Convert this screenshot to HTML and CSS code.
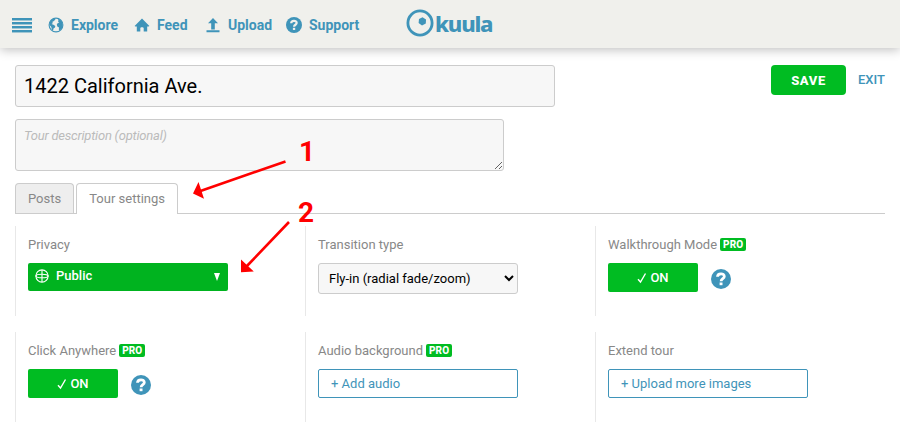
FILE: index.html
```html
<!DOCTYPE html>
<html lang="en">
<head>
    <meta charset="UTF-8">
    <meta name="viewport" content="width=device-width, initial-scale=1.0">
    <title>Kuula - Edit tour</title>
    <link rel="stylesheet" href="styles.css">
</head>
<body>
    <header class="header">
        <nav class="nav">
            <div class="menu-btn"><span></span><span></span><span></span><span></span></div>
            <a class="nav-item explore">
                <svg width="16" height="16" viewBox="0 0 16 16">
                    <circle cx="8" cy="8" r="6.9" fill="none" stroke="currentColor" stroke-width="1.1"/>
                    <path fill="currentColor" d="M1.200 6 3 3 6 1.300 7.500 2.300 6 4 4.500 4.800 4.700 6.300 3.500 7 5.500 7.700 7.300 9 7 10.500 5.500 11.500 5 14 3.800 12.800 3.300 10 1.500 8zM9.500 1.500 12 2.400 14.300 5 14.800 8 13.800 11.500 11.500 13.700 10.800 12.500 11 10.500 9.300 9.500 8.800 7.500 9.800 6 11.300 5.500 10 4.500 10.500 3z"/>
                </svg>
                <span>Explore</span>
            </a>
            <a class="nav-item feed">
                <svg width="16" height="16" viewBox="0 0 16 16">
                    <path fill="currentColor" d="M8 1.5 15.4 9l-.8.6h-1.4v5H9.700v-3.400c0-1.200-3.400-1.200-3.400 0v3.400H2.800v-5H1.400L.6 9z"/>
                </svg>
                <span>Feed</span>
            </a>
            <a class="nav-item upload">
                <svg width="14" height="16" viewBox="0 0 14 16">
                    <path fill="currentColor" d="M7 1l5 5.300H8.800v6.200H5.200V6.300H2zM.5 13.300h13v1.900H.5z"/>
                </svg>
                <span>Upload</span>
            </a>
            <a class="nav-item support">
                <svg width="16" height="16" viewBox="0 0 20 20">
                    <circle cx="10" cy="10" r="10" fill="currentColor"/>
                    <path d="M6.500 7.700C6.600 3.900 13.400 3.800 13.300 7.500c0 2.200-3.100 2.200-3.200 4.700" fill="none" stroke="#f0f0ec" stroke-width="2.800"/>
                    <rect x="8.600" y="13.500" width="2.900" height="2.700" fill="#f0f0ec"/>
                </svg>
                <span>Support</span>
            </a>
        </nav>
        <div class="logo">
            <svg width="28" height="28" viewBox="0 0 28 28">
                <circle cx="14" cy="14" r="12.100" fill="none" stroke="currentColor" stroke-width="2.800"/>
                <path fill="currentColor" d="M13 10 16.500 8.300 20 10.500 19.800 14.500 16 16.400 12.600 14z"/>
            </svg>
            <span>kuula</span>
        </div>
    </header>
    <main class="container">
        <div class="tour-top">
            <input class="tour-title" type="text" value="1422 California Ave.">
            <div class="actions">
                <button class="save">SAVE</button>
                <a class="exit">EXIT</a>
            </div>
        </div>
        <textarea class="tour-desc" placeholder="Tour description (optional)"></textarea>
        <div class="tabs">
            <div class="tab">Posts</div>
            <div class="tab active">Tour settings</div>
        </div>
        <div class="settings">
            <section class="cell">
                <div class="label">Privacy</div>
                <div class="privacy">
                    <svg width="14" height="14" viewBox="0 0 14 14" fill="none" stroke="#fff" stroke-width="1.1">
                        <circle cx="7" cy="7" r="6.1"/>
                        <ellipse cx="7" cy="7" rx="6.1" ry="1.8"/>
                        <path d="M7 1v12"/>
                    </svg>
                    <span>Public</span>
                    <svg class="caret" width="6" height="8" viewBox="0 0 6 8"><path fill="#fff" d="M0 0h6L3 8z"/></svg>
                </div>
            </section>
            <section class="cell">
                <div class="label">Transition type</div>
                <select class="select"><option>Fly-in (radial fade/zoom)</option></select>
            </section>
            <section class="cell">
                <div class="label">Walkthrough Mode <span class="pro">PRO</span></div>
                <div class="toggle-row">
                    <button class="toggle"><svg width="10" height="12" viewBox="0 0 10 12"><path d="M1 7.2 3.5 10 8.5 1.5" fill="none" stroke="#fff" stroke-width="1.4"/></svg>ON</button>
                    <svg class="help" width="20" height="20" viewBox="0 0 20 20">
                        <circle cx="10" cy="10" r="10" fill="currentColor"/>
                        <path d="M6.500 7.700C6.600 3.900 13.400 3.800 13.300 7.500c0 2.200-3.100 2.200-3.200 4.700" fill="none" stroke="#fff" stroke-width="2.800"/>
                        <rect x="8.600" y="13.500" width="2.900" height="2.700" fill="#fff"/>
                    </svg>
                </div>
            </section>
            <section class="cell">
                <div class="label">Click Anywhere <span class="pro">PRO</span></div>
                <div class="toggle-row">
                    <button class="toggle"><svg width="10" height="12" viewBox="0 0 10 12"><path d="M1 7.2 3.5 10 8.5 1.5" fill="none" stroke="#fff" stroke-width="1.4"/></svg>ON</button>
                    <svg class="help" width="20" height="20" viewBox="0 0 20 20">
                        <circle cx="10" cy="10" r="10" fill="currentColor"/>
                        <path d="M6.500 7.700C6.600 3.900 13.400 3.800 13.300 7.500c0 2.200-3.100 2.200-3.200 4.700" fill="none" stroke="#fff" stroke-width="2.800"/>
                        <rect x="8.600" y="13.500" width="2.900" height="2.700" fill="#fff"/>
                    </svg>
                </div>
            </section>
            <section class="cell">
                <div class="label">Audio background <span class="pro">PRO</span></div>
                <button class="outline-btn">+ Add audio</button>
            </section>
            <section class="cell">
                <div class="label">Extend tour</div>
                <button class="outline-btn">+ Upload more images</button>
            </section>
        </div>
    </main>
    <!-- numbered pointers on top of the page -->
    <svg class="pointers" width="900" height="440" viewBox="0 0 900 440">
        <path class="line" d="M285.5 161.5 199 191.5M289 222 246 267"/>
        <path class="head" d="M193 193.500 198.500 182 204 198.800zM241 272.300V259.500L253.800 271.500z"/>
        <text x="299" y="161">1</text>
        <text x="298" y="222">2</text>
    </svg>
</body>
</html>
```
FILE: styles.css
```css
html,body{
    margin:0;
    height:100%;
    background-color:#fff;
    font-family: Roboto, Arial, sans-serif;
    font-size:13px;
    overflow:hidden;
}
*{
    box-sizing:border-box;
}
input,textarea,select,button{
    font-family:inherit;
    margin:0;
    outline:none;
}
svg{
    display:block;
    flex:none;
}
.header{
    height:48px;
    display:flex;
    background-color:#f0f0ec;
    box-shadow:0 2px 10px rgba(0,0,0,0.25);
    color:#3f94b9;
}
.nav{
    display:flex;
    align-items:center;
    width:406px;
    padding-left:12px;
    padding-top:2px;
}
.menu-btn{
    width:20px;
    height:14px;
    display:flex;
    flex-direction:column;
    justify-content:space-between;
    margin-right:16px;
}
.menu-btn span{
    height:2px;
    background-color:#3f94b9;
    box-shadow:0 1px 0 rgba(63,148,185,0.45);
}
.nav-item{
    display:flex;
    align-items:center;
    gap:7px;
    font-size:14px;
    font-weight:700;
    white-space:nowrap;
}
.explore{
    width:86px;
}
.feed{
    width:72px;
}
.upload{
    width:80px;
    gap:8px;
}
.logo{
    display:flex;
    align-items:flex-start;
    padding-top:9px;
}
.logo span{
    margin-left:1px;
    font-family:"Noto Sans", sans-serif;
    font-size:22px;
    font-weight:800;
    line-height:28px;
    letter-spacing:-1.2px;
}
.container{
    padding:17px 15px 0;
}
.tour-top{
    display:flex;
    justify-content:space-between;
}
.tour-title{
    width:540px;
    height:42px;
    padding:0 8px;
    border:1px solid #ccc;
    border-radius:3px;
    background-color:#f7f7f7;
    font-size:20px;
    color:#000;
}
.actions{
    display:flex;
    gap:12px;
}
.save{
    width:75px;
    height:30px;
    padding:0;
    border:0;
    border-radius:4px;
    background-color:#00bc22;
    color:#fff;
    font-size:13px;
    font-weight:800;
    letter-spacing:0.6px;
}
.exit{
    color:#3f94b9;
    font-weight:500;
    line-height:30px;
}
.tour-desc{
    display:block;
    width:489px;
    height:52px;
    margin-top:12px;
    padding:8px;
    border:1px solid #ccc;
    border-radius:3px;
    background-color:#f7f7f7;
    font-size:13px;
    letter-spacing:-0.22px;
}
.tour-desc::placeholder{
    color:#bbb;
    font-style:italic;
}
.tabs{
    display:flex;
    gap:2px;
    height:31px;
    margin-top:12px;
    border-bottom:1px solid #ccc;
}
.tab{
    height:30px;
    padding:0 12px;
    border:1px solid #ccc;
    border-bottom:0;
    border-radius:4px 4px 0 0;
    background-color:#eee;
    line-height:30px;
    color:#888;
}
.tab.active{
    height:31px;
    background-color:#fff;
}
.settings{
    display:grid;
    grid-template-columns:repeat(3, 290px);
    grid-auto-rows:90px;
    row-gap:16px;
    padding-top:12px;
}
.cell{
    padding:9px 12px 0;
    border-left:1px solid #e8e8e8;
}
.label{
    display:flex;
    align-items:center;
    height:18px;
    margin-bottom:10px;
    color:#888;
}
.pro{
    height:13px;
    margin-left:3px;
    padding:0 3px;
    border-radius:2px;
    background-color:#00bc22;
    color:#fff;
    font-size:10px;
    font-weight:800;
    line-height:13px;
    letter-spacing:0.1px;
}
.privacy{
    display:flex;
    align-items:center;
    width:200px;
    height:28px;
    padding:0 8px 3px 7px;
    border-radius:2px;
    background-color:#00b31f;
    color:#fff;
    font-weight:500;
}
.privacy span{
    flex:1;
    margin-left:7px;
}
.caret{
    margin-top:3px;
}
.select{
    width:200px;
    height:31px;
    padding:0 6px;
    border:1px solid #ccc;
    border-radius:3px;
    background-color:#f7f7f7;
    color:#000;
    font-size:13px;
}
.toggle-row{
    display:flex;
}
.toggle{
    display:flex;
    align-items:center;
    justify-content:center;
    gap:3px;
    width:90px;
    height:29px;
    padding:0;
    border:0;
    border-radius:2px;
    background-color:#00bc22;
    color:#fff;
    font-size:13px;
    font-weight:500;
}
.help{
    margin:6px 0 0 13px;
    color:#3f94b9;
}
.outline-btn{
    width:200px;
    height:29px;
    padding:0 12px;
    border:1px solid #3f94b9;
    border-radius:2px;
    background-color:#fff;
    color:#3f94b9;
    font-size:13px;
    text-align:left;
}
.pointers{
    position:absolute;
    top:0;
    left:0;
    pointer-events:none;
}
.pointers .line{
    fill:none;
    stroke:#f00;
    stroke-width:2.6;
}
.pointers .head{
    fill:#f00;
}
.pointers text{
    fill:#f00;
    font-size:28px;
    font-weight:700;
}
```
